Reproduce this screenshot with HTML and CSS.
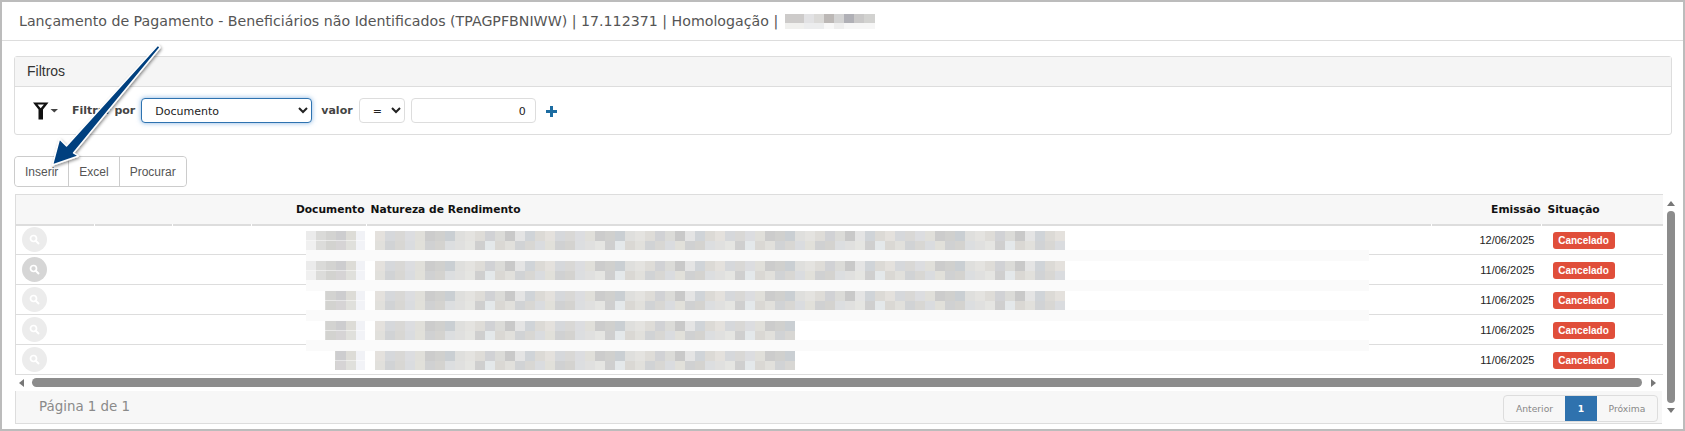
FILE: index.html
```html
<!DOCTYPE html>
<html lang="pt-BR">
<head>
<meta charset="utf-8">
<title>Lançamento de Pagamento</title>
<link rel="stylesheet" href="styles.css">
</head>
<body>
<div class="frame">
  <header class="title">
    <span>Lançamento de Pagamento - Beneficiários não Identificados (TPAGPFBNIWW) | 17.112371 | Homologação |</span>
    <span class="title-blur"></span>
  </header>
  <main class="content">
    <section class="panel">
      <div class="panel-head">Filtros</div>
      <div class="panel-body">
        <svg class="filter-icon" width="26" height="18" viewBox="0 0 26 18" aria-hidden="true">
          <path d="M0 0.500h15.500l-5.500 7V17.500H5.500V7.500z M4.500 2.500l3.200 3.800 3.200-3.800z" fill="#111" fill-rule="evenodd"/>
          <path d="M17.500 7h7.500l-3.700 3.500z" fill="#444"/>
        </svg>
        <label class="filter-label">Filtrar por</label>
        <select class="field field-main"><option>Documento</option></select>
        <label class="filter-label">valor</label>
        <select class="field field-op"><option>=</option></select>
        <input class="field field-value" value="0">
        <svg class="plus" width="11" height="11" viewBox="0 0 11 11" aria-hidden="true"><path d="M4 0h3v4h4v3H7v4H4V7H0V4h4z" fill="#1c6ca1"/></svg>
      </div>
    </section>
    <div class="btn-group">
      <button class="btn">Inserir</button>
      <button class="btn">Excel</button>
      <button class="btn">Procurar</button>
    </div>
    <section class="grid">
      <div class="grid-main">
        <table class="data">
          <colgroup>
            <col class="c1"><col class="c2"><col class="c3"><col class="c4"><col class="c5"><col class="c6"><col class="c7">
          </colgroup>
          <thead>
            <tr><th></th><th></th><th></th><th class="right">Documento</th><th>Natureza de Rendimento</th><th class="right th-date">Emissão</th><th class="th-status">Situação</th></tr>
          </thead>
          <tbody>
            <tr><td><span class="lens"><svg width="11" height="11" viewBox="0 0 11 11"><circle cx="4.500" cy="4.500" r="3" fill="none" stroke="#fff" stroke-width="1.700"/><path d="M7 7l3 3" stroke="#fff" stroke-width="2"/></svg></span></td><td></td><td></td><td></td><td></td><td class="date">12/06/2025</td><td><span class="badge">Cancelado</span></td></tr>
            <tr><td><span class="lens lens-hover"><svg width="11" height="11" viewBox="0 0 11 11"><circle cx="4.500" cy="4.500" r="3" fill="none" stroke="#fff" stroke-width="1.700"/><path d="M7 7l3 3" stroke="#fff" stroke-width="2"/></svg></span></td><td></td><td></td><td></td><td></td><td class="date">11/06/2025</td><td><span class="badge">Cancelado</span></td></tr>
            <tr><td><span class="lens"><svg width="11" height="11" viewBox="0 0 11 11"><circle cx="4.500" cy="4.500" r="3" fill="none" stroke="#fff" stroke-width="1.700"/><path d="M7 7l3 3" stroke="#fff" stroke-width="2"/></svg></span></td><td></td><td></td><td></td><td></td><td class="date">11/06/2025</td><td><span class="badge">Cancelado</span></td></tr>
            <tr><td><span class="lens"><svg width="11" height="11" viewBox="0 0 11 11"><circle cx="4.500" cy="4.500" r="3" fill="none" stroke="#fff" stroke-width="1.700"/><path d="M7 7l3 3" stroke="#fff" stroke-width="2"/></svg></span></td><td></td><td></td><td></td><td></td><td class="date">11/06/2025</td><td><span class="badge">Cancelado</span></td></tr>
            <tr><td><span class="lens"><svg width="11" height="11" viewBox="0 0 11 11"><circle cx="4.500" cy="4.500" r="3" fill="none" stroke="#fff" stroke-width="1.700"/><path d="M7 7l3 3" stroke="#fff" stroke-width="2"/></svg></span></td><td></td><td></td><td></td><td></td><td class="date">11/06/2025</td><td><span class="badge">Cancelado</span></td></tr>
          </tbody>
        </table>
        <div class="redact">
          <div class="redact-row"><span class="doc doc-a"></span><span class="mosaic nat nat-long"></span></div>
          <div class="band"></div>
          <div class="redact-row"><span class="doc doc-a"></span><span class="mosaic nat nat-long"></span></div>
          <div class="band"></div>
          <div class="redact-row"><span class="doc doc-b"></span><span class="mosaic nat nat-long"></span></div>
          <div class="band"></div>
          <div class="redact-row"><span class="doc doc-b"></span><span class="mosaic nat nat-short"></span></div>
          <div class="band"></div>
          <div class="redact-row"><span class="doc doc-c"></span><span class="mosaic nat nat-short"></span></div>
        </div>
        <div class="hscroll">
          <i class="tri tri-left"></i>
          <div class="hthumb"></div>
          <i class="tri tri-right"></i>
        </div>
        <footer class="grid-foot">
          <span class="page-info">Página 1 de 1</span>
          <nav class="pager">
            <span class="page">Anterior</span>
            <span class="page page-on">1</span>
            <span class="page page-last">Próxima</span>
          </nav>
        </footer>
      </div>
      <div class="vscroll">
        <i class="tri tri-up"></i>
        <div class="vthumb"></div>
        <i class="tri tri-down"></i>
      </div>
    </section>
  </main>
  <svg class="arrow" width="130" height="135" viewBox="40 38 130 135" aria-hidden="true">
    <defs>
      <filter id="arrow-shadow" x="-20%" y="-20%" width="140%" height="140%">
        <feDropShadow dx="1" dy="1.500" stdDeviation="1.500" flood-color="#000" flood-opacity=".45"/>
      </filter>
    </defs>
    <path d="M158 45 L160 47.500 L73.500 153 L78.500 156 L52.500 165 L59.500 139 L66.500 146 Z" fill="#01417f" stroke="#fff" stroke-width="1.400" stroke-linejoin="round" filter="url(#arrow-shadow)"/>
  </svg>
</div>
</body>
</html>
```
FILE: styles.css
```css
* { box-sizing: border-box; }
html, body { margin: 0; padding: 0; background: #fff; }
body { width: 1685px; height: 431px; overflow: hidden; font-family: "DejaVu Sans", sans-serif; }

.frame {
  position: relative;
  height: 431px;
  border: 2px solid #bcbcbc;
  background: #fff;
  overflow: hidden;
}

.title {
  height: 39px;
  border-bottom: 1px solid #ddd;
  padding-left: 17px;
  display: flex;
  align-items: center;
  gap: 7px;
  font-size: 14.2px;
  color: #555;
}

.mosaic {
  display: block;
  background-repeat: repeat-x;
  background-size: 170px 50%, 130px 50%;
  background-position: 0 0, 0 100%;
  background-image:
    linear-gradient(90deg, #e4e1dd 0 10px, #d6d8db 10px 20px, #d9d8d6 20px 30px, #dcdde0 30px 40px, #e0dfda 40px 50px, #cccccc 50px 60px, #d0d0ce 60px 70px, #cacfd3 70px 80px, #dfdfdd 80px 90px, #e4e3e0 90px 100px, #dedcd8 100px 110px, #d1d2d5 110px 120px, #dbdbd8 120px 130px, #c9c9c9 130px 140px, #e4e4e4 140px 150px, #d0d4d8 150px 160px, #dcdad6 160px 170px),
    linear-gradient(90deg, #e1e0dc 0 10px, #d1d3d5 10px 20px, #d8d7d4 20px 30px, #dadcdf 30px 40px, #e1e0da 40px 50px, #d0d1d2 50px 60px, #d4d3d0 60px 70px, #dcdee0 70px 80px, #e0e0df 80px 90px, #e5e5e2 90px 100px, #cfcfcf 100px 110px, #e4e8ea 110px 120px, #dad8d4 120px 130px);
}

.title-blur {
  display: block;
  width: 90px;
  height: 15px;
  background-repeat: no-repeat;
  background-size: 100% 9px, 100% 6px;
  background-position: 0 0, 0 100%;
  background-image:
    linear-gradient(90deg, #cdcbca 0 19px, #e2e2e4 19px 29px, #dbdad8 29px 39px, #bcb8b6 39px 49px, #d3d3d3 49px 59px, #b0b0b6 59px 69px, #c9c8c8 69px 79px, #d2d2d0 79px 90px),
    linear-gradient(90deg, #f0f0ee 0 19px, #ecedee 19px 39px, #f8f8f8 39px 49px, #eeeeee 49px 59px, #f6f6f6 59px 90px);
}

.content { padding: 15px 11px 0 12px; }

.panel {
  border: 1px solid #ddd;
  border-radius: 3px;
  height: 79px;
}
.panel-head {
  height: 30px;
  background: #f5f5f5;
  border-bottom: 1px solid #ddd;
  padding: 0 0 2px 12px;
  display: flex;
  align-items: center;
  font: 14px "Liberation Sans", Arial, sans-serif;
  color: #333;
}
.panel-body {
  height: 47px;
  display: flex;
  align-items: center;
  padding-left: 18px;
}
.filter-icon { margin-right: 13px; flex: none; }
.filter-label { font-size: 11px; font-weight: 700; color: #444; }
.field {
  height: 25px;
  background: #fff;
  border: 1px solid #ddd;
  border-radius: 4px;
  padding-top: 1px;
  font: 11px "DejaVu Sans", sans-serif;
  color: #222;
}
.field-main {
  width: 171px;
  margin: 0 9px 0 6px;
  padding-left: 9px;
  border-color: #2e73b0;
  box-shadow: 0 0 5px rgba(70, 140, 210, .65);
}
.field-op { width: 46px; margin-left: 6px; padding-left: 9px; }
.field-value { width: 125px; margin-left: 6px; padding: 1px 9px 0; text-align: right; }
.plus { margin: 2px 0 0 10px; flex: none; }

.btn-group {
  display: inline-flex;
  height: 31px;
  margin-top: 21px;
  vertical-align: top;
  border: 1px solid #ccc;
  border-radius: 4px;
}
.btn {
  border: 0;
  border-left: 1px solid #ccc;
  background: #fff;
  padding: 0 10px;
  font: 12px "Liberation Sans", Arial, sans-serif;
  color: #555;
}
.btn:first-child { border-left: 0; border-radius: 4px 0 0 4px; }
.btn:last-child { border-radius: 0 4px 4px 0; }

.grid {
  display: flex;
  margin: 7px -8px 0 1px;
  height: 229px;
}
.grid-main { position: relative; width: 1647px; flex: none; }

.data {
  table-layout: fixed;
  border-collapse: collapse;
  width: 1647px;
  border-left: 1px solid #ddd;
}
.c1 { width: 79px; } .c2 { width: 78px; } .c3 { width: 79px; } .c4 { width: 115px; }
.c5 { width: 1065px; } .c6 { width: 110px; } .c7 { width: 121px; }

.data th {
  position: relative;
  height: 30px;
  background: #f7f7f7;
  border-top: 1px solid #ddd;
  border-bottom: 2px solid #ddd;
  padding: 0 4px;
  font-size: 10.7px;
  font-weight: 700;
  color: #111;
  text-align: left;
  white-space: nowrap;
}
.data th::after {
  content: "";
  position: absolute;
  right: 0;
  bottom: -2px;
  width: 1px;
  height: 2px;
  background: #fff;
}
.data th:last-child::after { display: none; }
.data th.right { text-align: right; padding-right: 2px; }
.data th.th-date { padding-right: 1px; }
.data th.th-status { padding-left: 6px; }
.data td {
  height: 30px;
  padding: 0;
  border-bottom: 1px solid #ddd;
  vertical-align: middle;
}
.lens {
  display: flex;
  align-items: center;
  justify-content: center;
  width: 25px;
  height: 25px;
  margin-left: 6px;
  border-radius: 50%;
  background: #ececec;
}
.lens-hover { background: #d6d6d6; }
.date {
  font: 11px "Liberation Sans", Arial, sans-serif;
  color: #222;
  text-align: right;
  padding-right: 7px !important;
}
.badge {
  display: block;
  margin: 2px 0 0 11px;
  width: 62px;
  height: 17px;
  background: #e04e3a;
  border-radius: 3px;
  text-align: center;
  font: 700 10px/17px "Liberation Sans", Arial, sans-serif;
  color: #fff;
}

.redact { position: absolute; left: 291px; top: 37px; width: 1063px; }
.redact-row { display: flex; height: 19px; }
.band { height: 11px; background: #fafafa; }
.doc {
  display: block;
  height: 100%;
  margin-right: 10px;
  background-repeat: no-repeat;
  background-size: 59px 50%, 59px 50%;
  background-position: right top, right bottom;
  background-image:
    linear-gradient(90deg, #ebebeb 0 10px, #dadad8 10px 20px, #d3d3d1 20px 30px, #cdcdcf 30px 40px, #dddcd7 40px 50px, #f1f2f6 50px 59px),
    linear-gradient(90deg, #f0f0f0 0 10px, #dcdcda 10px 20px, #d3d3d0 20px 30px, #d6d4d5 30px 40px, #e0e0dc 40px 50px, #f2f3f7 50px 59px);
}
.doc-a { width: 59px; }
.doc-b { width: 40px; margin-left: 19px; }
.doc-c { width: 30px; margin-left: 29px; }
.nat { height: 100%; }
.nat-long { width: 690px; }
.nat-short { width: 420px; }

.hscroll {
  display: flex;
  align-items: center;
  height: 16px;
  padding: 0 6px 0 4px;
  justify-content: space-between;
  gap: 8px;
}
.hthumb { flex: 1; height: 9px; background: #8c8c8c; border-radius: 5px; margin: -2px 1px 0 0; }

.grid-foot {
  height: 33px;
  background: #f7f7f7;
  border-left: 1px solid #ddd;
  border-bottom: 1px solid #ddd;
  display: flex;
  align-items: center;
  justify-content: space-between;
  padding: 0 4px 0 23px;
}
.page-info { font-size: 13.4px; color: #8a8a8a; margin-top: -2px; }
.pager {
  display: flex;
  height: 27px;
  border: 1px solid #ddd;
  border-radius: 4px;
  background: #f7f7f7;
  font-size: 9.2px;
  color: #888;
  margin-top: 3px;
}
.page { width: 61px; display: flex; align-items: center; justify-content: center; }
.page-on { width: 32px; background: #2f72ae; color: #fff; font-weight: 700; }
.page-last { width: 60px; }

.vscroll {
  width: 18px;
  flex: none;
  display: flex;
  flex-direction: column;
  align-items: center;
  padding-top: 7px;
  gap: 5px;
}
.vthumb { width: 8px; height: 192px; background: #8c8c8c; border-radius: 4px; }

.tri { display: block; width: 0; height: 0; flex: none; border-style: solid; border-color: transparent; }
.tri-left { border-width: 4px 5px 4px 0; border-right-color: #777; }
.tri-right { border-width: 4px 0 4px 5px; border-left-color: #777; }
.tri-up { border-width: 0 4px 5px; border-bottom-color: #777; }
.tri-down { border-width: 5px 4px 0; border-top-color: #777; }

.arrow { position: absolute; left: 38px; top: 36px; pointer-events: none; }
```
